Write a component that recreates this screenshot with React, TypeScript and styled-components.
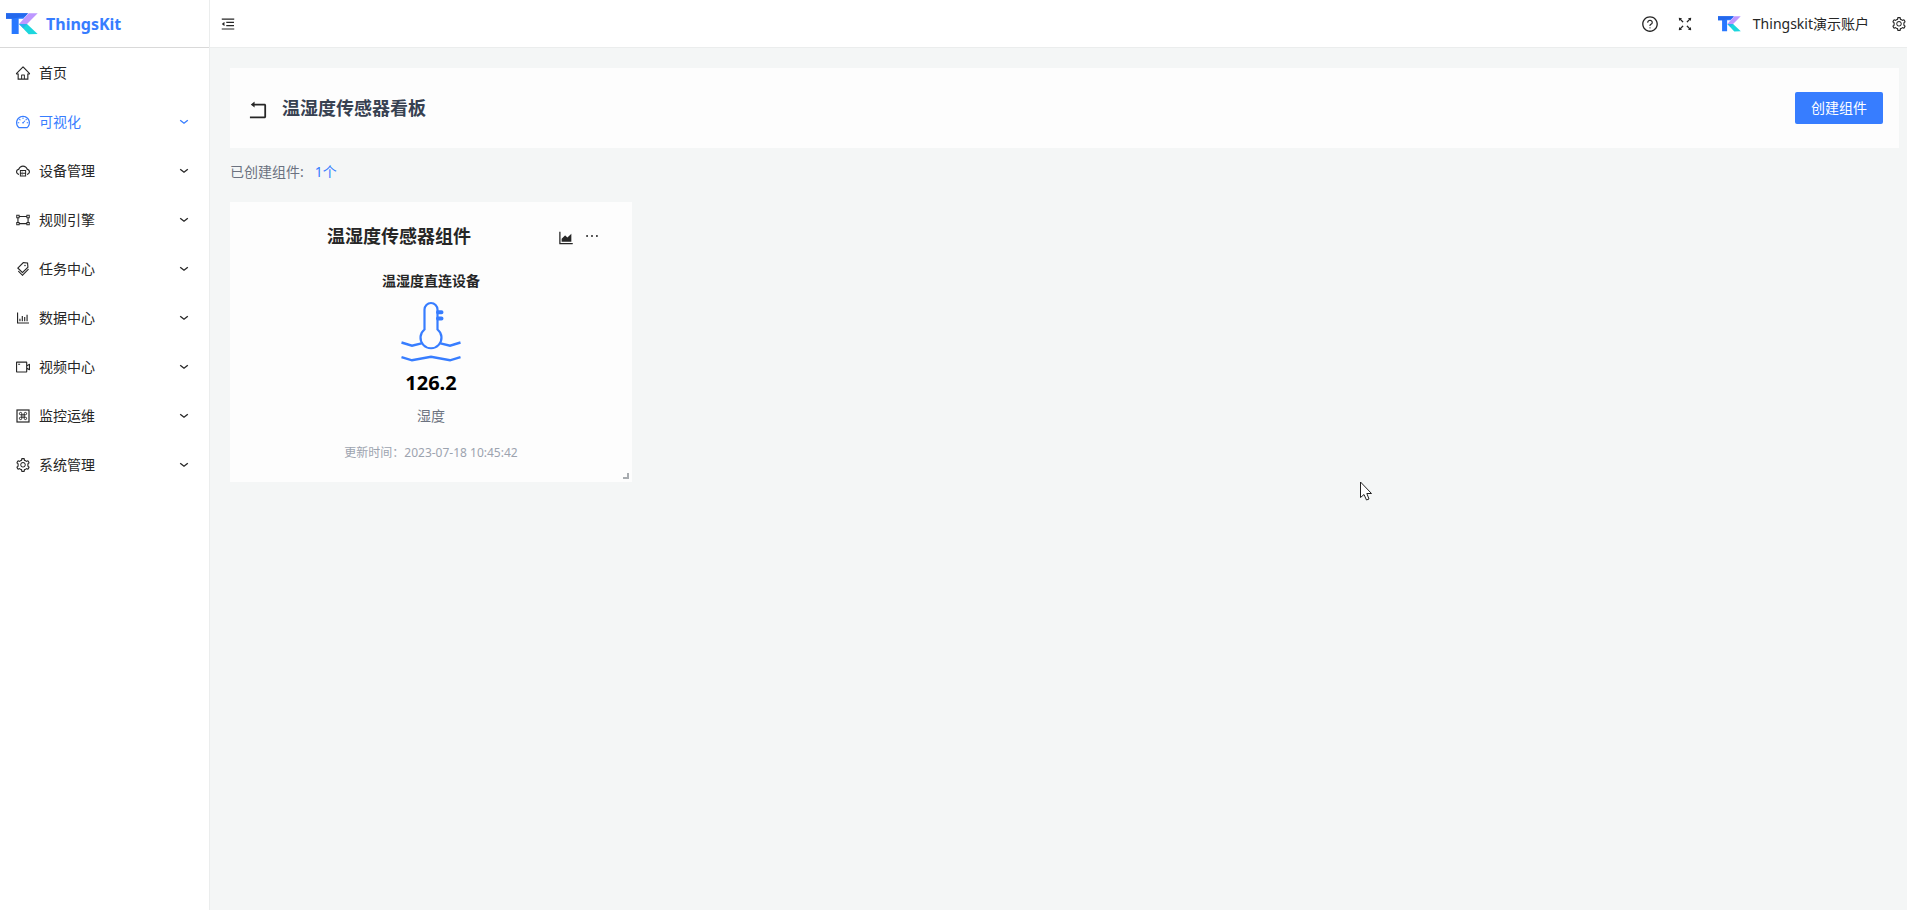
import React from 'react';
import styled, { createGlobalStyle } from 'styled-components';
import {
  AiOutlineHome,
  AiOutlineDashboard,
  AiOutlineCloudServer,
  AiOutlineGateway,
  AiOutlineTags,
  AiOutlineBarChart,
  AiOutlineVideoCamera,
  AiOutlineSetting,
  AiOutlineMenuFold,
  AiOutlineQuestionCircle,
  AiOutlineFullscreen,
  AiOutlineAreaChart,
  AiOutlineEllipsis,
  AiOutlineRollback,
} from 'react-icons/ai';

const BLUE = '#377dff';

const GlobalStyle = createGlobalStyle`
  * { box-sizing: border-box; }
  html, body { margin: 0; overflow-x: hidden; }
  body {
    background: #f4f6f6;
    color: #262626;
    font: 14px/22px "Noto Sans", "Noto Sans CJK SC", sans-serif;
  }
  h1, h2, h3, p, ul { margin: 0; padding: 0; }
  button { font: inherit; color: inherit; cursor: pointer; }
`;

const Page = styled.div`
  display: flex;
  min-height: 100vh;
`;

const Sidebar = styled.aside`
  flex: 0 0 210px;
  background: #fff;
  border-right: 1px solid #ebeded;
`;

const Brand = styled.a`
  display: flex;
  align-items: center;
  gap: 8px;
  height: 48px;
  padding-left: 6px;
  border-bottom: 1px solid #d9d9d9;
  color: ${BLUE};
  font-size: 16px;
  font-weight: 700;
  text-decoration: none;
`;

const Menu = styled.ul`
  list-style: none;
`;

const MenuLink = styled.a<{ $active?: boolean }>`
  display: flex;
  align-items: center;
  gap: 8px;
  height: 49px;
  padding: 0 20px 0 15px;
  color: ${(p) => (p.$active ? BLUE : '#262626')};
  text-decoration: none;
`;

const MenuIcon = styled.span`
  display: flex;
  width: 16px;
  justify-content: center;
`;

const MenuLabel = styled.span`
  flex: 1;
`;

const Main = styled.div`
  flex: 1;
  min-width: 0;
`;

const Header = styled.header`
  display: flex;
  align-items: center;
  justify-content: space-between;
  height: 48px;
  padding-left: 10px;
  background: #fff;
  border-bottom: 1px solid #ebeded;
`;

const HeaderTools = styled.div`
  display: flex;
  align-items: center;
  gap: 17px;
`;

const IconButton = styled.button`
  display: flex;
  padding: 0;
  border: 0;
  background: none;
`;

const Account = styled.button`
  display: flex;
  align-items: center;
  gap: 12px;
  margin: 0 5px 0 7px;
  padding: 0;
  border: 0;
  background: none;
`;

const Content = styled.main`
  padding: 20px 8px 0 20px;
`;

const TitleBar = styled.section`
  display: flex;
  align-items: center;
  gap: 12px;
  height: 80px;
  padding: 0 16px;
  background: #fdfdfd;
`;

const BackButton = styled(IconButton)`
  padding-top: 4px;
`;

const PageTitle = styled.h1`
  flex: 1;
  color: #374151;
  font-size: 18px;
  line-height: 28px;
  font-weight: 700;
`;

const PrimaryButton = styled.button`
  height: 32px;
  padding: 0 16px;
  border: 0;
  border-radius: 2px;
  background: ${BLUE};
  color: #fff;
`;

const Summary = styled.p`
  display: flex;
  gap: 11px;
  margin: 13px 0 19px;
  color: #6b7280;
`;

const Count = styled.span`
  color: ${BLUE};
`;

const Card = styled.article`
  position: relative;
  display: flex;
  flex-direction: column;
  align-items: center;
  width: 402px;
  min-height: 280px;
  padding: 20px 24px 16px;
  background: #fdfdfd;
`;

const CardHead = styled.div`
  display: flex;
  align-items: center;
  align-self: stretch;
`;

const CardTitle = styled.h2`
  flex: 1;
  text-align: center;
  font-size: 18px;
  line-height: 28px;
  font-weight: 700;
`;

const CardActions = styled.div`
  display: flex;
  align-items: center;
  gap: 8px;
  width: 64px;
  padding-left: 13px;
`;

const ChartButton = styled(IconButton)`
  padding-top: 3px;
`;

const DeviceName = styled.h3`
  margin: 20px 0 8px;
  font-size: 14px;
  font-weight: 700;
`;

const Value = styled.strong`
  margin: 5px 0 8px;
  color: #000;
  font-size: 20px;
  line-height: 28px;
`;

const Metric = styled.p`
  color: #6b7280;
`;

const Updated = styled.p`
  margin-top: 16px;
  color: #9ca3af;
  font-size: 12px;
  line-height: 20px;
`;

const ResizeCorner = styled.span`
  position: absolute;
  right: 3px;
  bottom: 3px;
  width: 6px;
  height: 6px;
  border-right: 2px solid #a8acb0;
  border-bottom: 2px solid #a8acb0;
`;

const Pointer = styled.svg`
  position: absolute;
  left: 1360px;
  top: 481px;
  pointer-events: none;
`;

const Logo = ({ width, height }: { width: number; height: number }) => (
  <svg width={width} height={height} viewBox="0 0 96 64" aria-hidden="true">
    <path d="M0 0H66L52 16H38V62H17V16H0Z" fill="#2878ff" />
    <path d="M0 0H66L58 9L17 16H0Z" fill="#2468ec" />
    <path d="M68 0H95L63 32H39Z" fill="#bd97ff" />
    <path d="M39 32H63L95 62L68 63Z" fill="#1cd6dd" />
    <path d="M39 32L52 45L63 32Z" fill="#28b2ef" />
  </svg>
);

const Chevron = () => (
  <svg width="10" height="6" viewBox="0 0 10 6" fill="none" aria-hidden="true">
    <path d="M1.2 1.3L5 4.2L8.8 1.3" stroke="currentColor" strokeWidth="1.4" />
  </svg>
);

const CommandBox = () => (
  <svg width="14" height="14" viewBox="0 0 14 14" fill="none" stroke="currentColor" aria-hidden="true">
    <rect x="1" y="1" width="12" height="12" strokeWidth="1.2" />
    <path
      d="M5.8 5.8V4.6A1.2 1.2 0 1 0 4.6 5.8H9.4A1.2 1.2 0 1 0 8.2 4.6V9.4A1.2 1.2 0 1 0 9.4 8.2H4.6A1.2 1.2 0 1 0 5.8 9.4Z"
      strokeWidth="1"
    />
  </svg>
);

const Thermometer = () => (
  <svg width="64" height="64" viewBox="0 0 64 64" fill="none" stroke={BLUE} strokeWidth="2.2" aria-hidden="true">
    <path d="M25.5 29.5V9.5a6.5 6.5 0 0 1 13 0V29.5a10.5 10.5 0 1 1-13 0Z" />
    <path d="M39 12.3H42.5M39 18.6H42.5" strokeWidth="4" strokeLinecap="round" />
    <path d="M2.5 42.5L13 45.7L22.5 43.3M41.5 43.3L51 45.7L61.5 42.5" strokeWidth="2.4" />
    <path d="M2.5 57.2L13 60.3L32 56.8L51 60.3L61.5 57.2" strokeWidth="2.4" />
  </svg>
);

const menu = [
  { label: '首页', icon: <AiOutlineHome size={16} />, leaf: true },
  { label: '可视化', icon: <AiOutlineDashboard size={16} />, active: true },
  { label: '设备管理', icon: <AiOutlineCloudServer size={16} /> },
  { label: '规则引擎', icon: <AiOutlineGateway size={16} /> },
  { label: '任务中心', icon: <AiOutlineTags size={16} /> },
  { label: '数据中心', icon: <AiOutlineBarChart size={16} /> },
  { label: '视频中心', icon: <AiOutlineVideoCamera size={16} /> },
  { label: '监控运维', icon: <CommandBox /> },
  { label: '系统管理', icon: <AiOutlineSetting size={16} /> },
];

export default function App() {
  return (
    <>
      <GlobalStyle />
      <Page>
        <Sidebar>
          <Brand href="#home">
            <Logo width={32} height={22} />
            ThingsKit
          </Brand>
          <nav>
            <Menu>
              {menu.map((item) => (
                <li key={item.label}>
                  <MenuLink href="#menu" $active={item.active}>
                    <MenuIcon>{item.icon}</MenuIcon>
                    <MenuLabel>{item.label}</MenuLabel>
                    {!item.leaf && <Chevron />}
                  </MenuLink>
                </li>
              ))}
            </Menu>
          </nav>
        </Sidebar>
        <Main>
          <Header>
            <IconButton aria-label="收起菜单">
              <AiOutlineMenuFold size={16} />
            </IconButton>
            <HeaderTools>
              <IconButton aria-label="帮助">
                <AiOutlineQuestionCircle size={18} />
              </IconButton>
              <IconButton aria-label="全屏">
                <AiOutlineFullscreen size={18} />
              </IconButton>
              <Account>
                <Logo width={23} height={16} />
                Thingskit演示账户
              </Account>
              <IconButton aria-label="设置">
                <AiOutlineSetting size={16} />
              </IconButton>
            </HeaderTools>
          </Header>
          <Content>
            <TitleBar>
              <BackButton aria-label="返回">
                <AiOutlineRollback size={24} />
              </BackButton>
              <PageTitle>温湿度传感器看板</PageTitle>
              <PrimaryButton>创建组件</PrimaryButton>
            </TitleBar>
            <Summary>
              已创建组件: <Count>1个</Count>
            </Summary>
            <Card>
              <CardHead>
                <CardTitle>温湿度传感器组件</CardTitle>
                <CardActions>
                  <ChartButton aria-label="历史趋势">
                    <AiOutlineAreaChart size={18} />
                  </ChartButton>
                  <IconButton aria-label="更多">
                    <AiOutlineEllipsis size={18} />
                  </IconButton>
                </CardActions>
              </CardHead>
              <DeviceName>温湿度直连设备</DeviceName>
              <Thermometer />
              <Value>126.2</Value>
              <Metric>湿度</Metric>
              <Updated>更新时间：2023-07-18 10:45:42</Updated>
              <ResizeCorner />
            </Card>
          </Content>
        </Main>
      </Page>
      <Pointer width="13" height="21" viewBox="0 0 13 21" aria-hidden="true">
        <path
          d="M0.5 1V16.5L4 13.5L6.5 19L9 18L6.8 12.5H11.5Z"
          fill="#fff"
          stroke="#222"
        />
      </Pointer>
    </>
  );
}
